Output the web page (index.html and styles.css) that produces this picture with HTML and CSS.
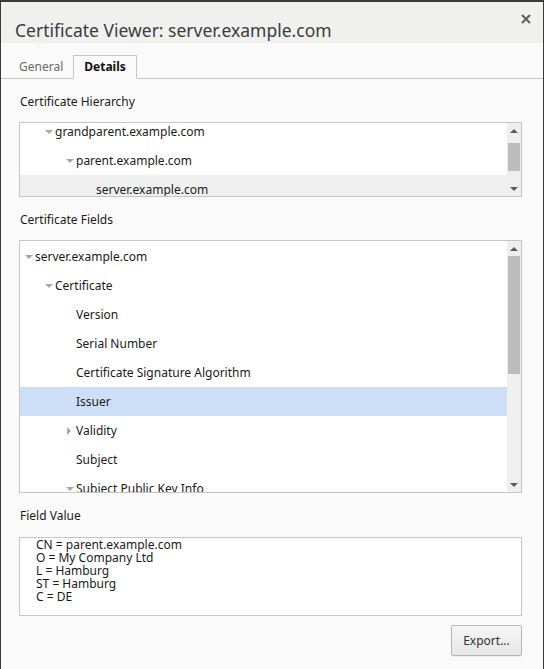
FILE: index.html
```html
<!DOCTYPE html>
<html lang="en">
<head>
  <meta charset="UTF-8">
  <title>Certificate Viewer</title>
  <link rel="stylesheet" href="styles.css">
</head>
<body>
  <div class="dialog">
    <div class="header">
      <h1>Certificate Viewer: server.example.com</h1>
      <button class="close-btn" aria-label="Close">
        <svg width="10" height="10" viewBox="0 0 10 10"><path d="M1 1 L9 9 M9 1 L1 9" stroke="#5f5f5f" stroke-width="2"/></svg>
      </button>
    </div>

    <div class="tabs">
      <span class="tab">General</span>
      <span class="tab active">Details</span>
    </div>

    <div class="content">
      <div class="label">Certificate Hierarchy</div>
      <div class="tree-box hierarchy">
        <div class="rows">
          <div class="row lvl1"><span class="twisty open"></span>grandparent.example.com</div>
          <div class="row lvl2"><span class="twisty open"></span>parent.example.com</div>
          <div class="row lvl3 current"><span class="twisty"></span>server.example.com</div>
        </div>
        <div class="scrollbar">
          <span class="arrow up"></span>
          <div class="track"><div class="thumb thumb-h"></div></div>
          <span class="arrow down"></span>
        </div>
      </div>

      <div class="label">Certificate Fields</div>
      <div class="tree-box fields">
        <div class="rows">
          <div class="row lvl0"><span class="twisty open"></span>server.example.com</div>
          <div class="row lvl1"><span class="twisty open"></span>Certificate</div>
          <div class="row lvl2"><span class="twisty"></span>Version</div>
          <div class="row lvl2"><span class="twisty"></span>Serial Number</div>
          <div class="row lvl2"><span class="twisty"></span>Certificate Signature Algorithm</div>
          <div class="row lvl2 selected"><span class="twisty"></span>Issuer</div>
          <div class="row lvl2"><span class="twisty closed"></span>Validity</div>
          <div class="row lvl2"><span class="twisty"></span>Subject</div>
          <div class="row lvl2"><span class="twisty open"></span>Subject Public Key Info</div>
        </div>
        <div class="scrollbar">
          <span class="arrow up"></span>
          <div class="track"><div class="thumb thumb-f"></div></div>
          <span class="arrow down"></span>
        </div>
      </div>

      <div class="label">Field Value</div>
      <div class="value-box">CN = parent.example.com
O = My Company Ltd
L = Hamburg
ST = Hamburg
C = DE</div>

      <div class="actions">
        <button class="export-btn">Export...</button>
      </div>
    </div>
  </div>
</body>
</html>
```

FILE: styles.css
```css
html, body {
  margin: 0;
  padding: 0;
}
body {
  background-color: #fafafa;
  font-family: "Noto Sans", "Open Sans", sans-serif;
  font-size: 12px;
  color: #1a1a1a;
}
.dialog {
  height: 669px;
  box-sizing: border-box;
  border-top: 2px solid #3a3a3a;
  border-right: 1px solid #3a3a3a;
  border-left: 1px solid #3a3a3a;
  background-color: #fafafa;
}
.header {
  height: 41px;
  background-color: #f0f0ef;
  position: relative;
}
.header h1 {
  margin: 0;
  padding: 16px 0 0 14px;
  font-size: 17.5px;
  font-weight: normal;
  color: #3c3c3c;
  line-height: 24px;
}
.close-btn {
  position: absolute;
  top: 9px;
  right: 9px;
  width: 16px;
  height: 16px;
  padding: 0;
  border: none;
  background: none;
  display: flex;
  align-items: center;
  justify-content: center;
}
.tabs {
  display: flex;
  align-items: flex-end;
  height: 36px;
  padding-left: 8px;
  border-bottom: 1px solid #c6c6c6;
  box-sizing: border-box;
}
.tab {
  height: 22px;
  line-height: 22px;
  padding: 0 10px;
  color: #6a6a6a;
}
.tab.active {
  font-weight: bold;
  color: #111;
  border: 1px solid #c6c6c6;
  border-bottom: 1px solid #fafafa;
  margin-bottom: -1px;
  padding: 0 10px;
  background: #fafafa;
}
.content {
  padding: 0 21px 0 18px;
}
.label {
  padding: 15px 0 0 1px;
  height: 28px;
  line-height: 16px;
  color: #1a1a1a;
}
.tree-box {
  display: flex;
  border: 1px solid #c6c6c6;
  background: #fff;
  overflow: hidden;
}
.hierarchy {
  height: 73px;
}
.hierarchy .rows {
  margin-top: -6px;
}
.fields {
  height: 251px;
}
.fields .rows {
  padding-top: 1px;
}
.rows {
  flex: 1;
}
.row {
  height: 29px;
  line-height: 29px;
  display: flex;
  align-items: center;
  white-space: nowrap;
}
.row.current { background: #efefef; }
.row.selected { background: #cddff6; }
.lvl0 { padding-left: 4px; }
.lvl1 { padding-left: 24px; }
.lvl2 { padding-left: 45px; }
.lvl3 { padding-left: 65px; }
.twisty {
  width: 11px;
  height: 8px;
  flex: none;
  position: relative;
}
.twisty.open::before {
  content: "";
  position: absolute;
  left: 1px;
  top: 2px;
  border-left: 4px solid transparent;
  border-right: 4px solid transparent;
  border-top: 4px solid #a8a8a8;
}
.twisty.closed::before {
  content: "";
  position: absolute;
  left: 2px;
  top: 0;
  border-top: 4px solid transparent;
  border-bottom: 4px solid transparent;
  border-left: 4px solid #a8a8a8;
}
.scrollbar {
  width: 14px;
  flex: none;
  background: #efefef;
  display: flex;
  flex-direction: column;
  align-items: center;
}
.track {
  flex: 1;
  width: 100%;
  position: relative;
}
.thumb {
  position: absolute;
  left: 1px;
  right: 1px;
  background: #bcbcbc;
}
.thumb-h { top: 0; height: 28px; }
.thumb-f { top: 0; height: 118px; }
.arrow {
  width: 0;
  height: 0;
  border-left: 4px solid transparent;
  border-right: 4px solid transparent;
}
.arrow.up { border-bottom: 4px solid #5a5a5a; margin: 6px 0 6px; }
.arrow.down { border-top: 4px solid #5a5a5a; margin: 4px 0 5px; }
.hierarchy .arrow.up { margin: 6px 0 10px; }
.fields .arrow.up { margin: 6px 0 5px; }
.value-box {
  height: 79px;
  margin-top: 1px;
  box-sizing: border-box;
  border: 1px solid #c6c6c6;
  background: #fff;
  padding: 0 0 0 16px;
  white-space: pre;
  line-height: 13px;
}
.actions {
  display: flex;
  justify-content: flex-end;
  padding-top: 9px;
}
.export-btn {
  width: 71px;
  height: 31px;
  font-family: inherit;
  font-size: 12px;
  color: #333;
  border: 1px solid #b6b6b6;
  border-radius: 2px;
  background: linear-gradient(#f6f6f6, #e6e6e6);
  box-shadow: 0 1px 0 rgba(0,0,0,0.05);
}
```
